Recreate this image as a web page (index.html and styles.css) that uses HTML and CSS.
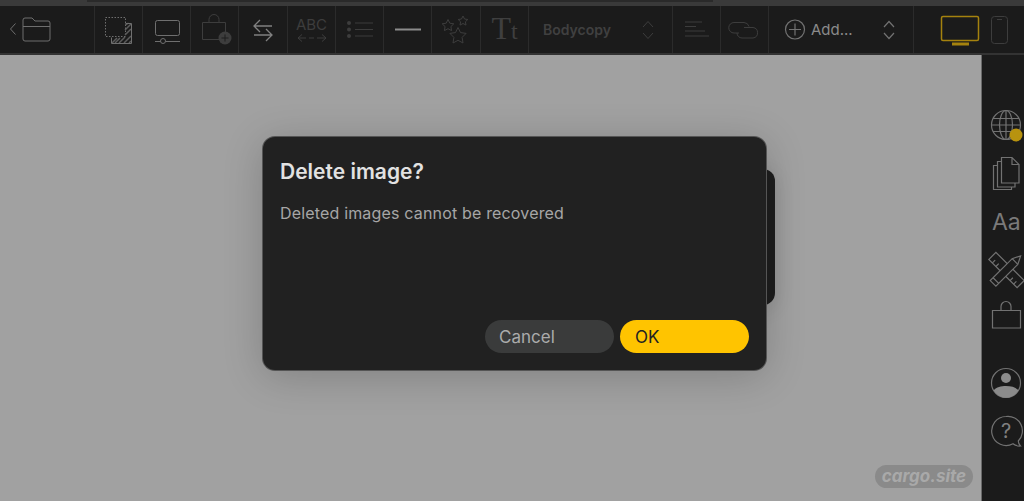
FILE: index.html
```html
<!DOCTYPE html>
<html lang="en">
<head>
    <meta charset="UTF-8">
    <meta name="viewport" content="width=device-width, initial-scale=1.0">
    <title>Cargo</title>
    <link rel="stylesheet" href="styles.css">
</head>
<body>
    <div class="top-strip"><div class="top-strip-tab"></div></div>

    <!-- toolbar -->
    <div class="toolbar">
        <div class="tool tool-first">
            <svg width="94" height="47" class="ic"><path d="M15.500 23.500l-5 5.500 5 5.500"/><path d="M25 41h23a2 2 0 0 0 2-2V23a2 2 0 0 0-2-2H35l-3-3h-7a2 2 0 0 0-2 2v19a2 2 0 0 0 2 2zM23 26.500h27"/></svg>
        </div>
        <div class="tool">
            <svg width="48" height="47" class="ic"><rect x="11.500" y="17.500" width="20" height="19" stroke-dasharray="1.500 1.500"/><path class="hatch" d="M25 43l6-6M30 43l7-7M35 43l2-2M18 43l5-5M21 43l5-5M31 35l6-6M31 30l6-6M31.500 25l3-2"/><path d="M31.500 23.500h6v20h-20v-6"/></svg>
        </div>
        <div class="tool">
            <svg width="48" height="47" class="ic"><rect x="13.500" y="20.500" width="24" height="15" rx="2"/><path d="M13 41.500h5.500M23.500 41.500H38"/><circle cx="21" cy="41" r="2.500"/></svg>
        </div>
        <div class="tool">
            <svg width="48" height="47" class="ic dim"><path d="M12.500 22.500h23v17h-23zM19 22.500v-3a5 5 0 0 1 10 0v3"/><circle class="solid" cx="35" cy="38" r="6.500"/><path class="plus" d="M35 34.500v7M31.500 38h7"/></svg>
        </div>
        <div class="tool tool-wide">
            <svg width="49" height="47" class="ic bright"><path d="M34 26H16M22 20l-6 6 6 6M16 35h18M28 29l6 6-6 6"/></svg>
        </div>
        <div class="tool">
            <div class="abc">ABC</div>
            <svg width="48" height="10" class="ic dim abc-arrows"><path d="M10 5h8M14 1.500L10 5l4 3.500M21 5h5M29 5h9M34 1.500L38 5l-4 3.500"/></svg>
        </div>
        <div class="tool">
            <svg width="48" height="47" class="ic dim"><circle class="solid" cx="14" cy="23" r="2"/><circle class="solid" cx="14" cy="29.500" r="2"/><circle class="solid" cx="14" cy="36" r="2"/><path d="M20 23h18M20 29.500h18M20 36h18"/></svg>
        </div>
        <div class="tool">
            <svg width="48" height="47"><path class="dash" d="M12 29.500h26"/></svg>
        </div>
        <div class="tool tool-wide">
            <svg width="49" height="47" class="ic dim"><path d="M17 19.500l1.800 3.700 4 .6-2.900 2.800.7 4-3.600-1.900-3.600 1.900.7-4-2.900-2.800 4-.6zM32 16l1.500 3 3.300.5-2.400 2.300.6 3.300-3-1.600-3 1.600.6-3.300-2.400-2.300 3.300-.5zM27 27.500l2.500 5.100 5.600.8-4 4 .9 5.600-5-2.700-5 2.700.9-5.600-4-4 5.600-.8z"/></svg>
        </div>
        <div class="tool tool-tt">
            <div class="tt"><span class="tt-big">T</span><span class="tt-small">t</span></div>
        </div>
        <div class="tool tool-select">
            <span class="select-text">Bodycopy</span>
            <svg width="20" height="47" class="ic dim"><path d="M5 27l5-5.500 5 5.500M5 33l5 5.500 5-5.500"/></svg>
        </div>
        <div class="tool">
            <svg width="48" height="47" class="ic dim"><path d="M13 22h17M13 26.500h11M13 31h20M13 36h24"/></svg>
        </div>
        <div class="tool">
            <svg width="48" height="47" class="ic dim"><path d="M19 33h-5a5.200 5.200 0 0 1 0-10.500h10a5.500 5.500 0 0 1 5 4"/><path d="M24 27.500h9a5.300 5.300 0 0 1 0 10.500h-11a5 5 0 0 1-5-5"/></svg>
        </div>
        <div class="tool tool-add">
            <svg width="22" height="47" class="ic mid"><circle cx="11" cy="29.500" r="9.500"/><path d="M11 23.500v12M5 29.500h12"/></svg>
            <span class="add-text">Add...</span>
            <svg width="20" height="47" class="ic mid"><path d="M5 27l5-5.500 5 5.500M5 33l5 5.500 5-5.500"/></svg>
        </div>
        <div class="tool tool-device">
            <svg width="42" height="47" class="ic gold"><rect x="1.500" y="16.500" width="37" height="24" rx="1.500"/><path class="gold-base" d="M12 44h17"/></svg>
            <svg width="18" height="47" class="ic dim"><rect x="1.500" y="16.500" width="16" height="27" rx="3"/><path d="M7 19.500h5"/></svg>
        </div>
    </div>

    <div class="workspace">
        <!-- canvas -->
        <div class="canvas">
            <div class="behind-panel"></div>
            <div class="dialog">
                <h2 class="dialog-title">Delete image?</h2>
                <p class="dialog-text">Deleted images cannot be recovered</p>
                <div class="dialog-buttons">
                    <button class="btn btn-cancel">Cancel</button>
                    <button class="btn btn-ok">OK</button>
                </div>
            </div>
            <div class="badge">cargo.site</div>
        </div>

        <!-- right sidebar -->
        <div class="sidebar">
            <div class="side-item">
                <svg width="43" height="48" class="ic mid"><circle cx="25" cy="24" r="14.500"/><ellipse cx="25" cy="24" rx="6.500" ry="14.500"/><path d="M25 9.500v29M12 17.500h26M10.500 24h29M12 30.500h26"/><circle class="dot" cx="35" cy="34" r="6.500"/></svg>
            </div>
            <div class="side-item">
                <svg width="43" height="48" class="ic mid"><path d="M20.500 8.500h10.500l7 7v18.500h-17.500zM31 8.500v7h7"/><path d="M20.500 12.500h-4v25.500h17.500v-4"/><path d="M16.500 16.500h-4v24h18v-2.500"/></svg>
            </div>
            <div class="side-item side-text">Aa</div>
            <div class="side-item">
                <svg width="43" height="48" class="ic mid">
                    <g transform="rotate(-45 25.500 25)"><rect x="20.500" y="5" width="10" height="40"/><path d="M20.500 10h4M20.500 15h4M20.500 35h4M20.500 40h4"/></g>
                    <g transform="rotate(45 25.500 25)"><path class="pencil" d="M25.500 5l4 8v31h-8V13z"/><path d="M21.500 13h8M21.500 40h8"/></g>
                </svg>
            </div>
            <div class="side-item">
                <svg width="43" height="48" class="ic mid"><path d="M11.500 17.500h28v17.500h-28zM20 17.500v-4a5 5 0 0 1 10 0v4"/></svg>
            </div>
            <div class="side-gap"></div>
            <div class="side-item">
                <svg width="43" height="48" class="ic mid"><circle cx="25" cy="24" r="14.500"/><circle class="fill" cx="25" cy="19" r="5"/><path class="fill" d="M12.500 31.500a14.500 14.500 0 0 0 25 0c-3-3.500-7.500-4.500-12.500-4.500s-9.500 1-12.500 4.500z"/></svg>
            </div>
            <div class="side-item">
                <svg width="43" height="48" class="ic mid"><path d="M25 9.500a14.500 14.500 0 1 0 7 27.300c2 1.800 4.500 2.400 7.500 2.200-1.500-1.500-2.200-3-2.200-5A14.500 14.500 0 0 0 25 9.500z"/></svg>
                <span class="help-mark">?</span>
            </div>
        </div>
    </div>
</body>
</html>
```

FILE: styles.css
```css
html, body {
    margin: 0;
    padding: 0;
    height: 100%;
}
body {
    display: flex;
    flex-direction: column;
    width: 1024px;
    height: 501px;
    overflow: hidden;
    font-family: Inter, "Liberation Sans", sans-serif;
    background-color: #1b1b1b;
}
svg {
    display: block;
}
.ic {
    fill: none;
    stroke: #6f6f6f;
    stroke-width: 1;
}
.ic.dim {
    stroke: #3d3d3d;
}
.ic.mid {
    stroke: #727272;
    stroke-width: 1.2;
}
.ic.bright {
    stroke: #808080;
    stroke-width: 1.3;
}
.ic.gold {
    stroke: #a5820e;
    stroke-width: 1.5;
}
.solid {
    fill: #3d3d3d;
    stroke: none;
}
.plus {
    stroke: #1f1f1f;
}
.dash {
    stroke: #8c8c8c;
    stroke-width: 2;
}
.hatch {
    stroke: #5c5c5c;
    stroke-width: 1.500;
}
.gold-base {
    stroke-width: 3;
}
.dot {
    fill: #b8930f;
    stroke: none;
}
.pencil {
    fill: #1b1b1b;
}
.fill {
    fill: #8b8b8b;
    stroke: none;
}

/* top strip */
.top-strip {
    height: 6px;
    flex: none;
    background-color: #3a3a3a;
    padding-left: 87px;
}
.top-strip-tab {
    width: 626px;
    height: 2px;
    background-color: #2a2a2a;
}

/* toolbar */
.toolbar {
    display: flex;
    flex: none;
    height: 47px;
    background-color: #1b1b1b;
    border-bottom: 2px solid #333;
}
.tool {
    position: relative;
    display: flex;
    align-items: flex-start;
    justify-content: flex-start;
    width: 47px;
    height: 47px;
    flex: none;
    border-right: 1px solid #2b2b2b;
}
.tool svg {
    margin: -6px 0 0 -1px;
    flex: none;
}
.tool-first {
    width: 94px;
}
.tool-first svg {
    margin-left: 0;
}
.tool-wide {
    width: 48px;
}
.abc {
    position: absolute;
    top: 9px;
    left: 0;
    width: 100%;
    text-align: center;
    font-size: 15px;
    color: #3d3d3d;
}
.tool svg.abc-arrows {
    position: absolute;
    top: 27px;
    left: 0;
    margin: 0;
}
.tool-tt {
    justify-content: center;
}
.tt {
    font-family: "Liberation Serif", serif;
    color: #3f3f3f;
    line-height: 47px;
    margin-top: -1px;
}
.tt-big {
    font-size: 32px;
}
.tt-small {
    font-size: 24px;
}
.tool-select {
    width: 144px;
    padding-left: 14px;
    box-sizing: border-box;
}
.select-text {
    width: 96px;
    font-size: 14px;
    font-weight: 600;
    line-height: 47px;
    color: #404040;
}
.tool-add {
    width: 145px;
    padding-left: 16px;
    box-sizing: border-box;
}
.add-text {
    margin-left: 5px;
    width: 69px;
    font-size: 15px;
    line-height: 47px;
    color: #8a8a8a;
}
.tool-device {
    width: 110px;
    border-right: 0;
    padding-left: 27px;
    box-sizing: border-box;
    gap: 9px;
}

/* canvas + sidebar */
.workspace {
    display: flex;
    flex: 1;
    min-height: 0;
}
.canvas {
    position: relative;
    flex: 1;
    background-color: #a1a1a1;
    border-right: 1px solid #6a6a6a;
}
.behind-panel {
    position: absolute;
    left: 700px;
    top: 114px;
    width: 75px;
    height: 136px;
    border-radius: 12px;
    background-color: #1e1e1e;
    box-shadow: 0 4px 20px rgba(0, 0, 0, 0.12);
}
.dialog {
    position: absolute;
    left: 263px;
    top: 82px;
    width: 503px;
    height: 233px;
    box-sizing: border-box;
    padding: 22px 17px 17px;
    display: flex;
    flex-direction: column;
    background-color: #212121;
    border-radius: 12px;
    box-shadow: 0 0 0 1px #555, 0 6px 40px rgba(0, 0, 0, 0.2);
}
.dialog-title {
    margin: 0;
    font-size: 21px;
    font-weight: 600;
    line-height: 26px;
    color: #e2e2e2;
}
.dialog-text {
    margin: 17px 0 0;
    font-size: 16px;
    letter-spacing: 0.17px;
    line-height: 22px;
    color: #a6a6a6;
}
.dialog-buttons {
    display: flex;
    justify-content: flex-end;
    gap: 6px;
    margin-top: auto;
}
.btn {
    width: 129px;
    height: 33px;
    padding: 0 0 0 15px;
    border: none;
    border-radius: 17px;
    text-align: left;
    font-family: inherit;
    font-size: 17px;
}
.btn-cancel {
    padding-left: 14px;
    background-color: #3a3b3b;
    color: #ababab;
}
.btn-ok {
    background-color: #ffc400;
    color: #222;
}
.badge {
    position: absolute;
    left: 875px;
    top: 410px;
    width: 98px;
    height: 23px;
    border-radius: 12px;
    background-color: #8a8a8a;
    text-align: center;
    font-size: 17px;
    font-style: italic;
    font-weight: 700;
    line-height: 22px;
    color: #a9a9a9;
}
.sidebar {
    display: flex;
    flex-direction: column;
    flex: none;
    width: 42px;
    padding-top: 46px;
    background-color: #1b1b1b;
}
.side-item {
    position: relative;
    height: 48px;
    margin-left: -1px;
}
.side-gap {
    height: 18px;
}
.side-text {
    padding-left: 11px;
    font-size: 23px;
    line-height: 50px;
    color: #7a7a7a;
}
.help-mark {
    position: absolute;
    left: 20px;
    top: 10px;
    font-size: 20px;
    line-height: 28px;
    color: #808080;
}
```
